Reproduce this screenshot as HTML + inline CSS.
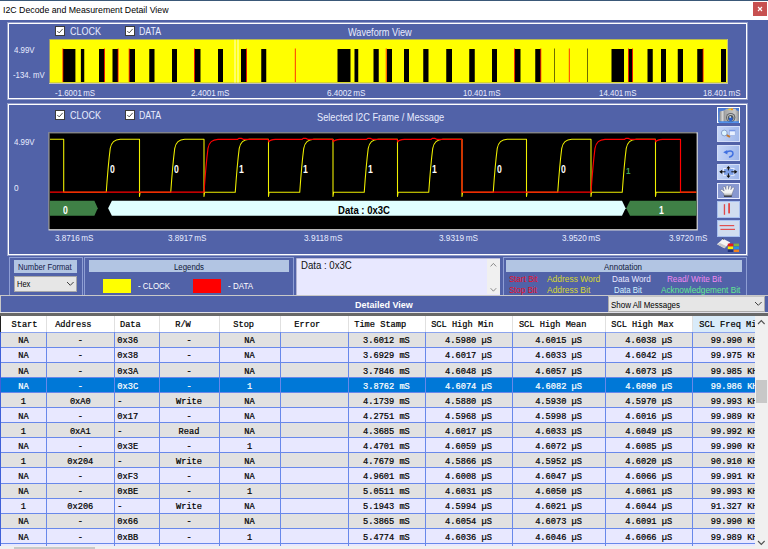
<!DOCTYPE html>
<html><head><meta charset="utf-8"><title>I2C Decode and Measurement Detail View</title>
<style>html,body{margin:0;padding:0}body{width:768px;height:549px;position:relative;overflow:hidden;background:#5162A8;font-family:"Liberation Sans",sans-serif}</style>
</head><body>
<div style="position:absolute;left:0;top:0;width:768px;height:20px;background:#fff"></div>
<div style="position:absolute;left:0;top:0;width:768px;height:1px;background:#3A5878"></div>
<span id="t0" style='position:absolute;white-space:pre;font:9.3px/1 "Liberation Sans",sans-serif;color:#000;transform-origin:0 50%;left:2.50px;top:6.16px;transform:scaleX(0.9429);'>I2C Decode and Measurement Detail View</span>
<div style="position:absolute;left:753px;top:2px;width:14px;height:14px;background:#C75050"></div>
<svg style="position:absolute;left:753px;top:2px" width="14" height="14"><path d="M5,5 L9,9 M9,5 L5,9" stroke="#fff" stroke-width="1.1" fill="none"/></svg>
<div style="position:absolute;left:8px;top:23px;width:737px;height:74px;border:1px solid #fff;box-shadow:0 0 0 1px rgba(255,255,255,.38)"></div>
<svg style="position:absolute;left:55px;top:26.3px" width="10" height="10" viewBox="0 0 10 10"><rect x="0.5" y="0.5" width="9" height="9" fill="#fff" stroke="#3c3c3c" stroke-width="1"/><path d="M2.3,5 L4.2,6.9 L7.7,2.9" stroke="#484848" stroke-width="0.95" fill="none"/></svg>
<svg style="position:absolute;left:124.5px;top:26.3px" width="10" height="10" viewBox="0 0 10 10"><rect x="0.5" y="0.5" width="9" height="9" fill="#fff" stroke="#3c3c3c" stroke-width="1"/><path d="M2.3,5 L4.2,6.9 L7.7,2.9" stroke="#484848" stroke-width="0.95" fill="none"/></svg>
<span id="t1" style='position:absolute;white-space:pre;font:10.2px/1 "Liberation Sans",sans-serif;color:#E8ECFF;transform-origin:0 50%;left:69.90px;top:26.52px;transform:scaleX(0.8830);'>CLOCK</span>
<span id="t2" style='position:absolute;white-space:pre;font:10.2px/1 "Liberation Sans",sans-serif;color:#E8ECFF;transform-origin:0 50%;left:139.00px;top:26.52px;transform:scaleX(0.8575);'>DATA</span>
<span id="t3" style='position:absolute;white-space:pre;font:10.2px/1 "Liberation Sans",sans-serif;color:#E8ECFF;transform-origin:0 50%;left:347.50px;top:28.02px;transform:scaleX(0.9009);'>Waveform View</span>
<span id="t4" style='position:absolute;white-space:pre;font:9.8px/1 "Liberation Sans",sans-serif;color:#E8ECFF;transform-origin:0 50%;left:14.00px;top:45.01px;transform:scaleX(0.8044);'>4.99V</span>
<span id="t5" style='position:absolute;white-space:pre;font:9.8px/1 "Liberation Sans",sans-serif;color:#E8ECFF;transform-origin:0 50%;left:13.40px;top:70.41px;transform:scaleX(0.7950);'>-134. mV</span>
<span id="t6" style='position:absolute;white-space:pre;font:9.8px/1 "Liberation Sans",sans-serif;color:#E8ECFF;transform-origin:0 50%;word-spacing:-1px;left:55.25px;top:87.51px;transform:scaleX(0.8055);'>-1.6001 mS</span>
<span id="t7" style='position:absolute;white-space:pre;font:9.8px/1 "Liberation Sans",sans-serif;color:#E8ECFF;transform-origin:0 50%;word-spacing:-1px;left:191.00px;top:87.51px;transform:scaleX(0.8299);'>2.4001 mS</span>
<span id="t8" style='position:absolute;white-space:pre;font:9.8px/1 "Liberation Sans",sans-serif;color:#E8ECFF;transform-origin:0 50%;word-spacing:-1px;left:326.50px;top:87.51px;transform:scaleX(0.8299);'>6.4002 mS</span>
<span id="t9" style='position:absolute;white-space:pre;font:9.8px/1 "Liberation Sans",sans-serif;color:#E8ECFF;transform-origin:0 50%;word-spacing:-1px;left:463.00px;top:87.51px;transform:scaleX(0.8084);'>10.401 mS</span>
<span id="t10" style='position:absolute;white-space:pre;font:9.8px/1 "Liberation Sans",sans-serif;color:#E8ECFF;transform-origin:0 50%;word-spacing:-1px;left:599.00px;top:87.51px;transform:scaleX(0.8084);'>14.401 mS</span>
<span id="t11" style='position:absolute;white-space:pre;font:9.8px/1 "Liberation Sans",sans-serif;color:#E8ECFF;transform-origin:0 50%;word-spacing:-1px;left:702.50px;top:87.51px;transform:scaleX(0.8084);'>18.401 mS</span>
<svg style="position:absolute;left:49px;top:39px" width="680" height="46" viewBox="49 39 680 46"><rect x="49" y="39" width="679" height="45" fill="#8a8a60"/><rect x="49" y="39" width="679" height="44.8" fill="#d0d0d0"/><rect x="49" y="39" width="678.5" height="44" fill="#9a9a70"/><rect x="50" y="39.7" width="677.3" height="42.9" fill="#FFFF00"/><rect x="63" y="49" width="12.40" height="33" fill="#000"/><rect x="62.5" y="48.5" width="0.8" height="33.5" fill="#f00"/><rect x="80.9" y="49" width="3.35" height="33" fill="#000"/><rect x="99" y="49" width="5.50" height="33" fill="#000"/><rect x="104.2" y="48.5" width="0.8" height="33.5" fill="#f00"/><rect x="112.5" y="49" width="5.50" height="33" fill="#000"/><rect x="117.7" y="48.5" width="0.8" height="33.5" fill="#f00"/><rect x="129.25" y="49" width="5.75" height="33" fill="#000"/><rect x="128.75" y="48.5" width="0.8" height="33.5" fill="#f00"/><rect x="149.25" y="49" width="5.25" height="33" fill="#000"/><rect x="172" y="49" width="5.00" height="33" fill="#000"/><rect x="194.5" y="49" width="6.00" height="33" fill="#000"/><rect x="194.0" y="48.5" width="0.8" height="33.5" fill="#f00"/><rect x="218" y="49" width="5.00" height="33" fill="#000"/><rect x="241" y="49" width="5.50" height="33" fill="#000"/><rect x="246.2" y="48.5" width="0.8" height="33.5" fill="#f00"/><rect x="261.25" y="49" width="5.00" height="33" fill="#000"/><rect x="337.5" y="49" width="13.00" height="33" fill="#000"/><rect x="354.5" y="49" width="3.75" height="33" fill="#000"/><rect x="373.5" y="49" width="5.25" height="33" fill="#000"/><rect x="387" y="49" width="5.00" height="33" fill="#000"/><rect x="385.8" y="48.5" width="0.8" height="33.5" fill="#f00"/><rect x="404" y="49" width="5.00" height="33" fill="#000"/><rect x="423.25" y="49" width="5.25" height="33" fill="#000"/><rect x="446.25" y="49" width="5.75" height="33" fill="#000"/><rect x="469.25" y="49" width="5.50" height="33" fill="#000"/><rect x="492" y="49" width="5.00" height="33" fill="#000"/><rect x="514.75" y="49" width="5.75" height="33" fill="#000"/><rect x="514.25" y="48.5" width="0.8" height="33.5" fill="#f00"/><rect x="535.25" y="49" width="5.50" height="33" fill="#000"/><rect x="540.45" y="48.5" width="0.8" height="33.5" fill="#f00"/><rect x="611.5" y="49" width="12.50" height="33" fill="#000"/><rect x="628.5" y="49" width="4.00" height="33" fill="#000"/><rect x="628.0" y="48.5" width="0.8" height="33.5" fill="#f00"/><rect x="632.2" y="48.5" width="0.8" height="33.5" fill="#f00"/><rect x="647.5" y="49" width="5.25" height="33" fill="#000"/><rect x="661" y="49" width="5.00" height="33" fill="#000"/><rect x="677.75" y="49" width="5.25" height="33" fill="#000"/><rect x="697.25" y="49" width="5.75" height="33" fill="#000"/><rect x="702.7" y="48.5" width="0.8" height="33.5" fill="#f00"/><rect x="721" y="49" width="5.00" height="33" fill="#000"/><rect x="234.5" y="39.7" width="1" height="42.9" fill="#FFFFD0"/><rect x="237.5" y="39.7" width="1" height="42.9" fill="#FFFFD0"/><rect x="294.85" y="48.5" width="0.8" height="33.5" fill="#f00"/><rect x="568.85" y="48.5" width="0.8" height="33.5" fill="#f00"/><rect x="554.1" y="48.5" width="0.8" height="33.5" fill="#4a4a00"/><rect x="587.0" y="48.5" width="0.8" height="33.5" fill="#4a4a00"/></svg>
<div style="position:absolute;left:8px;top:104px;width:737px;height:149px;border:1px solid #fff;box-shadow:0 0 0 1px rgba(255,255,255,.38)"></div>
<svg style="position:absolute;left:55px;top:110.3px" width="10" height="10" viewBox="0 0 10 10"><rect x="0.5" y="0.5" width="9" height="9" fill="#fff" stroke="#3c3c3c" stroke-width="1"/><path d="M2.3,5 L4.2,6.9 L7.7,2.9" stroke="#484848" stroke-width="0.95" fill="none"/></svg>
<svg style="position:absolute;left:124.5px;top:110.3px" width="10" height="10" viewBox="0 0 10 10"><rect x="0.5" y="0.5" width="9" height="9" fill="#fff" stroke="#3c3c3c" stroke-width="1"/><path d="M2.3,5 L4.2,6.9 L7.7,2.9" stroke="#484848" stroke-width="0.95" fill="none"/></svg>
<span id="t12" style='position:absolute;white-space:pre;font:10.2px/1 "Liberation Sans",sans-serif;color:#E8ECFF;transform-origin:0 50%;left:69.90px;top:111.22px;transform:scaleX(0.8830);'>CLOCK</span>
<span id="t13" style='position:absolute;white-space:pre;font:10.2px/1 "Liberation Sans",sans-serif;color:#E8ECFF;transform-origin:0 50%;left:139.00px;top:111.22px;transform:scaleX(0.8575);'>DATA</span>
<span id="t14" style='position:absolute;white-space:pre;font:10.2px/1 "Liberation Sans",sans-serif;color:#E8ECFF;transform-origin:0 50%;left:317.00px;top:112.92px;transform:scaleX(0.9062);'>Selected I2C Frame / Message</span>
<span id="t15" style='position:absolute;white-space:pre;font:9.8px/1 "Liberation Sans",sans-serif;color:#E8ECFF;transform-origin:0 50%;left:14.00px;top:137.01px;transform:scaleX(0.8044);'>4.99V</span>
<span id="t16" style='position:absolute;white-space:pre;font:9.8px/1 "Liberation Sans",sans-serif;color:#E8ECFF;transform-origin:0 50%;left:14.00px;top:183.21px;transform:scaleX(0.8436);'>0</span>
<span id="t17" style='position:absolute;white-space:pre;font:9.8px/1 "Liberation Sans",sans-serif;color:#E8ECFF;transform-origin:0 50%;word-spacing:-1px;left:55.00px;top:232.81px;transform:scaleX(0.8299);'>3.8716 mS</span>
<span id="t18" style='position:absolute;white-space:pre;font:9.8px/1 "Liberation Sans",sans-serif;color:#E8ECFF;transform-origin:0 50%;word-spacing:-1px;left:168.00px;top:232.81px;transform:scaleX(0.8299);'>3.8917 mS</span>
<span id="t19" style='position:absolute;white-space:pre;font:9.8px/1 "Liberation Sans",sans-serif;color:#E8ECFF;transform-origin:0 50%;word-spacing:-1px;left:304.00px;top:232.81px;transform:scaleX(0.8433);'>3.9118 mS</span>
<span id="t20" style='position:absolute;white-space:pre;font:9.8px/1 "Liberation Sans",sans-serif;color:#E8ECFF;transform-origin:0 50%;word-spacing:-1px;left:439.00px;top:232.81px;transform:scaleX(0.8407);'>3.9319 mS</span>
<span id="t21" style='position:absolute;white-space:pre;font:9.8px/1 "Liberation Sans",sans-serif;color:#E8ECFF;transform-origin:0 50%;word-spacing:-1px;left:562.00px;top:232.81px;transform:scaleX(0.8299);'>3.9520 mS</span>
<span id="t22" style='position:absolute;white-space:pre;font:9.8px/1 "Liberation Sans",sans-serif;color:#E8ECFF;transform-origin:0 50%;word-spacing:-1px;left:669.00px;top:232.81px;transform:scaleX(0.8299);'>3.9720 mS</span>
<svg style="position:absolute;left:48px;top:132px" width="651" height="100" viewBox="48 132 651 100"><rect x="48.5" y="132.3" width="649.3" height="98.2" fill="#d8d8d8"/><rect x="48.5" y="132.3" width="648" height="96.8" fill="#707070"/><rect x="49.75" y="133.5" width="646.75" height="95.6" fill="#000"/><path d="M50,139.3 L63.7,139.3 L63.7,192.2 L106.25,192.2 C107.65,172.2 108.85,159.3 110.25,148.3 C111.45,141.9 114.25,139.60000000000002 120.25,139.3 L139.50,139.3 L139.50,196.5 L140.10,192.2 L170.75,192.2 C172.15,172.2 173.35,159.3 174.75,148.3 C175.95,141.9 178.75,139.60000000000002 184.75,139.3 L204.00,139.3 L204.00,196.5 L204.60,192.2 L235.25,192.2 C236.65,172.2 237.85,159.3 239.25,148.3 C240.45,141.9 243.25,139.60000000000002 249.25,139.3 L268.50,139.3 L268.50,196.5 L269.10,192.2 L299.75,192.2 C301.15,172.2 302.35,159.3 303.75,148.3 C304.95,141.9 307.75,139.60000000000002 313.75,139.3 L333.00,139.3 L333.00,196.5 L333.60,192.2 L364.25,192.2 C365.65,172.2 366.85,159.3 368.25,148.3 C369.45,141.9 372.25,139.60000000000002 378.25,139.3 L397.50,139.3 L397.50,196.5 L398.10,192.2 L428.75,192.2 C430.15,172.2 431.35,159.3 432.75,148.3 C433.95,141.9 436.75,139.60000000000002 442.75,139.3 L462.00,139.3 L462.00,196.5 L462.60,192.2 L493.25,192.2 C494.65,172.2 495.85,159.3 497.25,148.3 C498.45,141.9 501.25,139.60000000000002 507.25,139.3 L526.50,139.3 L526.50,196.5 L527.10,192.2 L557.75,192.2 C559.15,172.2 560.35,159.3 561.75,148.3 C562.95,141.9 565.75,139.60000000000002 571.75,139.3 L591.00,139.3 L591.00,196.5 L591.60,192.2 L622.25,192.2 C623.65,172.2 624.85,159.3 626.25,148.3 C627.45,141.9 630.25,139.60000000000002 636.25,139.3 L655.50,139.3 L655.50,196.5 L656.10,192.2 L696.3,192.2" stroke="#F0F000" stroke-width="1.08" fill="none" stroke-linejoin="round"/><path d="M50,192.2 L204,192.2 C205.40,172.2 206.60,159.3 208.00,148.3 C209.20,141.9 212.00,139.60000000000002 218.00,139.3 L237.75,139.3 L238.75,138.4 L241.25,138.4 L243.25,139.3 L268.20,139.3 L268.90,141.8 C269.70,140.10000000000002 271.50,139.5 275.50,139.3 L302.25,139.3 L303.25,138.4 L305.75,138.4 L307.75,139.3 L332.70,139.3 L333.40,141.8 C334.20,140.10000000000002 336.00,139.5 340.00,139.3 L366.75,139.3 L367.75,138.4 L370.25,138.4 L372.25,139.3 L397.20,139.3 L397.90,141.8 C398.70,140.10000000000002 400.50,139.5 404.50,139.3 L431.25,139.3 L432.25,138.4 L434.75,138.4 L436.75,139.3 L462,139.3 L462,192.2 L591,192.2 C592.40,172.2 593.60,159.3 595.00,148.3 C596.20,141.9 599.00,139.60000000000002 605.00,139.3 L624.75,139.3 L625.75,138.4 L628.25,138.4 L630.25,139.3 L655.20,139.3 L655.90,141.8 C656.70,140.10000000000002 658.50,139.5 662.50,139.3 L680.5,139.3 L680.5,192.2 L696.3,192.2" stroke="#FF0000" stroke-width="1.18" fill="none" stroke-linejoin="round"/><polygon points="49.75,200.75 94.4,200.75 97.75,208.25 94.4,215.75 49.75,215.75" fill="#3F8046"/><polygon points="111.9,200.75 622,200.75 625.6,208.25 622,215.75 111.9,215.75 108.1,208.25" fill="#E0FFFF"/><polygon points="630,200.75 696.5,200.75 696.5,215.75 630,215.75 626.3,208.25" fill="#3F8046"/></svg>
<span id="t23" style='position:absolute;white-space:pre;font:bold 10px/1 "Liberation Sans",sans-serif;color:#fff;transform-origin:0 50%;left:109.85px;top:165.31px;transform:scaleX(0.8629);'>0</span>
<span id="t24" style='position:absolute;white-space:pre;font:bold 10px/1 "Liberation Sans",sans-serif;color:#fff;transform-origin:0 50%;left:174.35px;top:165.31px;transform:scaleX(0.8629);'>0</span>
<span id="t25" style='position:absolute;white-space:pre;font:bold 10px/1 "Liberation Sans",sans-serif;color:#fff;transform-origin:0 50%;left:238.85px;top:165.31px;transform:scaleX(0.8629);'>1</span>
<span id="t26" style='position:absolute;white-space:pre;font:bold 10px/1 "Liberation Sans",sans-serif;color:#fff;transform-origin:0 50%;left:303.35px;top:165.31px;transform:scaleX(0.8629);'>1</span>
<span id="t27" style='position:absolute;white-space:pre;font:bold 10px/1 "Liberation Sans",sans-serif;color:#fff;transform-origin:0 50%;left:367.85px;top:165.31px;transform:scaleX(0.8629);'>1</span>
<span id="t28" style='position:absolute;white-space:pre;font:bold 10px/1 "Liberation Sans",sans-serif;color:#fff;transform-origin:0 50%;left:432.35px;top:165.31px;transform:scaleX(0.8629);'>1</span>
<span id="t29" style='position:absolute;white-space:pre;font:bold 10px/1 "Liberation Sans",sans-serif;color:#fff;transform-origin:0 50%;left:496.85px;top:165.31px;transform:scaleX(0.8629);'>0</span>
<span id="t30" style='position:absolute;white-space:pre;font:bold 10px/1 "Liberation Sans",sans-serif;color:#fff;transform-origin:0 50%;left:561.35px;top:165.31px;transform:scaleX(0.8629);'>0</span>
<span id="t31" style='position:absolute;white-space:pre;font:bold 9.6px/1 "Liberation Sans",sans-serif;color:#3FA058;transform-origin:0 50%;left:626.40px;top:165.51px;transform:scaleX(0.8421);'>1</span>
<span id="t32" style='position:absolute;white-space:pre;font:bold 10px/1 "Liberation Sans",sans-serif;color:#fff;transform-origin:0 50%;left:62.85px;top:205.92px;transform:scaleX(0.8629);'>0</span>
<span id="t33" style='position:absolute;white-space:pre;font:bold 10px/1 "Liberation Sans",sans-serif;color:#fff;transform-origin:0 50%;left:659.10px;top:205.92px;transform:scaleX(0.8629);'>1</span>
<span id="t34" style='position:absolute;white-space:pre;font:bold 10.2px/1 "Liberation Sans",sans-serif;color:#000;transform-origin:0 50%;left:338.00px;top:206.32px;transform:scaleX(0.9369);'>Data : 0x3C</span>
<div style="position:absolute;left:717.4px;top:107.0px;width:22.8px;height:16.4px;box-sizing:border-box;background:linear-gradient(#4878D0,#6090E0);border:1px solid #fff"></div>
<div style="position:absolute;left:717.4px;top:126.0px;width:22.8px;height:16.4px;box-sizing:border-box;background:linear-gradient(100deg,#C6D6F8,#9EB6EA);border:1px solid #D4DEF8"></div>
<div style="position:absolute;left:717.4px;top:144.9px;width:22.8px;height:16.4px;box-sizing:border-box;background:linear-gradient(100deg,#C6D6F8,#9EB6EA);border:1px solid #D4DEF8"></div>
<div style="position:absolute;left:717.4px;top:163.7px;width:22.8px;height:16.4px;box-sizing:border-box;background:linear-gradient(100deg,#C6D6F8,#9EB6EA);border:1px solid #D4DEF8"></div>
<div style="position:absolute;left:717.4px;top:182.5px;width:22.8px;height:16.4px;box-sizing:border-box;background:#8898D0;border:1px solid #E8ECFF"></div>
<div style="position:absolute;left:717.4px;top:201.3px;width:22.8px;height:16.4px;box-sizing:border-box;background:#D0DDF0;border:1px solid #A8C0F0"></div>
<div style="position:absolute;left:717.4px;top:220.2px;width:22.8px;height:16.4px;box-sizing:border-box;background:#D0DDF0;border:1px solid #A8C0F0"></div>
<svg style="position:absolute;left:717px;top:106px" width="24" height="148" viewBox="717 106 24 148">
<defs>
<linearGradient id="cam" x1="0" y1="0" x2="1" y2="0"><stop offset="0" stop-color="#8c8c8c"/><stop offset=".18" stop-color="#e0e0e0"/><stop offset=".3" stop-color="#a8a8a8"/><stop offset=".8" stop-color="#c8c8c8"/><stop offset="1" stop-color="#909090"/></linearGradient>
<linearGradient id="hand" x1="0" y1="0" x2="0" y2="1"><stop offset="0" stop-color="#fff"/><stop offset=".7" stop-color="#f0f0f0"/><stop offset="1" stop-color="#a0a0a0"/></linearGradient>
</defs>
<!-- camera -->
<path d="M719.6,111.4 L724.4,110.4 L726.3,108.8 L735.6,108.8 L736.6,110.4 L738.8,111.2 L738.8,122 L719.6,122 Z" fill="url(#cam)"/>
<rect x="723.6" y="110.6" width="1" height="11.2" fill="#707070" fill-opacity=".7"/>
<rect x="728.4" y="108.5" width="4.6" height="1.6" fill="#F8D020"/><rect x="731" y="108.5" width="2" height="1.6" fill="#F09020"/>
<circle cx="730.7" cy="117.6" r="4.7" fill="#606468"/><circle cx="730.7" cy="117.6" r="3.6" fill="#c8c8c8"/><circle cx="730.7" cy="117.8" r="2.9" fill="#50585c"/>
<circle cx="730.7" cy="119" r="2" fill="#2860D0"/><circle cx="730.2" cy="117" r="0.9" fill="#d0d8e0"/>
<rect x="718.6" y="121.4" width="20.4" height="1.4" fill="#2878E8"/>
<!-- zoom -->
<rect x="729.4" y="130" width="5.8" height="5.6" fill="#E8F0FF" stroke="#90A8E0" stroke-width=".6"/><rect x="729.4" y="130" width="5.8" height="1.3" fill="#7898E8"/>
<path d="M725.8,134.6 L729.4,136.6" stroke="#C07830" stroke-width="1.8" stroke-linecap="round"/>
<circle cx="724.3" cy="133" r="2.9" fill="#DDF4FF" stroke="#8098C8" stroke-width=".9"/>
<!-- undo -->
<path d="M723.2,152.2 L727.4,150 L727.4,154.4 Z" fill="#4070E0"/>
<path d="M726.8,152.1 C730.5,150.2 733.2,151.2 733,153.6 C732.8,155.6 731,156.6 729.6,157" stroke="#4070E0" stroke-width="1.5" fill="none" stroke-linecap="round"/>
<!-- move -->
<rect x="723.6" y="168.5" width="10.4" height="6.8" fill="#5080E0" fill-opacity=".55" stroke="#F0F4FF" stroke-width=".9"/>
<path d="M719.2,171.8 L722.2,169.7 L722.2,173.9 Z M737.4,171.8 L734.4,169.7 L734.4,173.9 Z M728.4,166 L726.3,168.6 L730.5,168.6 Z M728.4,178 L726.3,175.4 L730.5,175.4 Z" fill="#101010"/>
<path d="M721,171.8 L725.5,171.8 M731.3,171.8 L736,171.8 M728.4,167.5 L728.4,170.4 M728.4,173.4 L728.4,176.5" stroke="#101010" stroke-width="1"/>
<!-- hand -->
<path d="M724.2,196 L723.6,193.4 L720.4,190.2 C720.6,189.2 721.8,189.2 722.6,189.8 L724.2,191 L723.2,187.2 C723.4,186.2 724.6,186.2 725,187.2 L726,189.6 L726.2,186 C726.6,185 727.8,185 728.2,186 L728.4,189.4 L729.4,186.2 C729.9,185.4 731,185.6 731.2,186.6 L730.8,189.8 L732.4,187.6 C733.2,187 734.2,187.4 734.2,188.4 L732.6,192.4 L731.6,196 Z" fill="url(#hand)" stroke="#404860" stroke-width=".35"/>
<path d="M724,196.2 L731.8,196.2" stroke="#202020" stroke-width="1"/>
<!-- v cursors -->
<rect x="723.8" y="204.2" width="1.3" height="10.6" fill="#E04848"/><rect x="728.2" y="203.2" width="1.8" height="10.2" fill="#E04848"/>
<!-- h cursors -->
<rect x="719.6" y="225" width="14.6" height="1.2" fill="#E05050"/><rect x="720.4" y="228.8" width="14.6" height="1.2" fill="#E05050"/>
<!-- bucket + palette -->
<path d="M717,244.3 L723.1,238.8 L730.3,242.4 L724.4,248.2 Z" fill="#f4f4f4"/><path d="M717,244.3 L724.4,248.2 L726.5,246.2 L720,243 Z" fill="#c8c8c8"/>
<path d="M722.4,238.4 L724,239.6" stroke="#303030" stroke-width=".8"/>
<rect x="727.8" y="243.6" width="5.4" height="2.9" fill="#E81818"/><rect x="733.8" y="243.6" width="5.2" height="2.7" fill="#80B040"/>
<rect x="727.8" y="246.5" width="5.4" height="2.9" fill="#F8F000"/><rect x="733.8" y="246.7" width="5.2" height="2.5" fill="#2090E8"/>
<rect x="727.8" y="249.4" width="5.4" height="2.6" fill="#203078"/><rect x="733.8" y="249.6" width="5.2" height="2.4" fill="#F08020"/>
</svg>

<div style="position:absolute;left:9px;top:257.3px;width:72px;height:37.69999999999999px;border:1px solid #8E9ED4;border-bottom:none"></div>
<div style="position:absolute;left:13.5px;top:260px;width:63.4px;height:12.5px;background:#B2C5E3"></div>
<span id="t35" style='position:absolute;white-space:pre;font:9.6px/1 "Liberation Sans",sans-serif;color:#14204a;transform-origin:0 50%;left:17.50px;top:262.01px;transform:scaleX(0.8002);'>Number Format</span>
<div style="position:absolute;left:13.5px;top:276px;width:63.2px;height:15.5px;box-sizing:border-box;background:#E6E6E6;border:1px solid #A8A8A8"></div>
<span id="t36" style='position:absolute;white-space:pre;font:9.3px/1 "Liberation Sans",sans-serif;color:#000;transform-origin:0 50%;left:16.90px;top:279.66px;transform:scaleX(0.8098);'>Hex</span>
<svg style="position:absolute;left:66px;top:281px" width="9" height="6"><path d="M1,1 L4.3,4.3 L7.6,1" stroke="#404040" stroke-width="1" fill="none"/></svg>
<div style="position:absolute;left:84.3px;top:257.3px;width:208.2px;height:37.69999999999999px;border:1px solid #8E9ED4;border-bottom:none"></div>
<div style="position:absolute;left:88.9px;top:260px;width:200px;height:12.2px;background:#B2C5E3"></div>
<span id="t37" style='position:absolute;white-space:pre;font:9.6px/1 "Liberation Sans",sans-serif;color:#10183a;transform-origin:0 50%;left:173.75px;top:261.91px;transform:scaleX(0.8149);'>Legends</span>
<div style="position:absolute;left:103.25px;top:279px;width:28px;height:13.75px;background:#FFFF00"></div>
<span id="t38" style='position:absolute;white-space:pre;font:9.8px/1 "Liberation Sans",sans-serif;color:#fff;transform-origin:0 50%;left:138.00px;top:280.91px;transform:scaleX(0.8050);'>- CLOCK</span>
<div style="position:absolute;left:193px;top:279px;width:28.25px;height:13.75px;background:#FF0000"></div>
<span id="t39" style='position:absolute;white-space:pre;font:9.8px/1 "Liberation Sans",sans-serif;color:#fff;transform-origin:0 50%;left:227.50px;top:280.91px;transform:scaleX(0.8151);'>- DATA</span>
<div style="position:absolute;left:296.25px;top:257.8px;width:204px;height:36.9px;background:#E8E8FF;box-shadow:inset 0.6px 0.6px 0 rgba(70,75,120,.55)"></div>
<div style="position:absolute;left:486.5px;top:258.5px;width:13.5px;height:35.5px;background:#F0F0F0"></div>
<svg style="position:absolute;left:490px;top:262px" width="8" height="6"><path d="M0.6,4.4 L3.4,1.4 L6.2,4.4" stroke="#808080" stroke-width="0.9" fill="none"/></svg>
<svg style="position:absolute;left:490px;top:286.5px" width="8" height="6"><path d="M0.6,1.2 L3.4,4.2 L6.2,1.2" stroke="#808080" stroke-width="0.9" fill="none"/></svg>
<span id="t40" style='position:absolute;white-space:pre;font:10px/1 "Liberation Sans",sans-serif;color:#101010;transform-origin:0 50%;left:301.25px;top:260.92px;transform:scaleX(0.9609);'>Data : 0x3C</span>
<div style="position:absolute;left:503.4px;top:257.3px;width:241.70000000000005px;height:37.69999999999999px;border:1px solid #8E9ED4;border-bottom:none"></div>
<div style="position:absolute;left:506.2px;top:260px;width:236px;height:12.2px;background:#B2C5E3"></div>
<span id="t41" style='position:absolute;white-space:pre;font:9.6px/1 "Liberation Sans",sans-serif;color:#10183a;transform-origin:0 50%;left:604.00px;top:261.71px;transform:scaleX(0.8283);'>Annotation</span>
<span id="t42" style='position:absolute;white-space:pre;font:9px/1 "Liberation Sans",sans-serif;color:#E8102A;transform-origin:0 50%;left:508.50px;top:274.60px;transform:scaleX(0.8902);'>Start Bit</span>
<span id="t43" style='position:absolute;white-space:pre;font:9px/1 "Liberation Sans",sans-serif;color:#E8102A;transform-origin:0 50%;left:508.50px;top:285.60px;transform:scaleX(0.8880);'>Stop Bit</span>
<span id="t44" style='position:absolute;white-space:pre;font:9px/1 "Liberation Sans",sans-serif;color:#D8D830;transform-origin:0 50%;left:546.50px;top:274.60px;transform:scaleX(0.9365);'>Address Word</span>
<span id="t45" style='position:absolute;white-space:pre;font:9px/1 "Liberation Sans",sans-serif;color:#D8D830;transform-origin:0 50%;left:546.50px;top:285.60px;transform:scaleX(0.9396);'>Address Bit</span>
<span id="t46" style='position:absolute;white-space:pre;font:9px/1 "Liberation Sans",sans-serif;color:#E8E8FF;transform-origin:0 50%;left:611.75px;top:274.60px;transform:scaleX(0.9041);'>Data Word</span>
<span id="t47" style='position:absolute;white-space:pre;font:9px/1 "Liberation Sans",sans-serif;color:#D0F0FF;transform-origin:0 50%;left:613.50px;top:285.60px;transform:scaleX(0.8746);'>Data Bit</span>
<span id="t48" style='position:absolute;white-space:pre;font:9px/1 "Liberation Sans",sans-serif;color:#F088F0;transform-origin:0 50%;left:666.50px;top:274.60px;transform:scaleX(0.9029);'>Read/ Write Bit</span>
<span id="t49" style='position:absolute;white-space:pre;font:9px/1 "Liberation Sans",sans-serif;color:#60E890;transform-origin:0 50%;left:661.00px;top:285.60px;transform:scaleX(0.9157);'>Acknowledgement Bit</span>
<div style="position:absolute;left:0;top:294.75px;width:768px;height:1.4px;background:#C8C8C8"></div>
<div style="position:absolute;left:0;top:294.75px;width:1.3px;height:18px;background:#C8C8C8"></div>
<div style="position:absolute;left:0;top:312.3px;width:768px;height:1px;background:#E0E0E8"></div>
<span id="t50" style='position:absolute;white-space:pre;font:bold 9.5px/1 "Liberation Sans",sans-serif;color:#fff;transform-origin:0 50%;left:355.00px;top:300.36px;transform:scaleX(0.9455);'>Detailed View</span>
<div style="position:absolute;left:608px;top:296.2px;width:156.8px;height:15.6px;box-sizing:border-box;background:#E6E6E6;border:1px solid #ACACAC;border-top-color:#C4C4C4"></div>
<span id="t51" style='position:absolute;white-space:pre;font:9.6px/1 "Liberation Sans",sans-serif;color:#000;transform-origin:0 50%;left:611.00px;top:299.61px;transform:scaleX(0.8295);'>Show All Messages</span>
<svg style="position:absolute;left:754px;top:301.2px" width="9" height="6"><path d="M1,1 L4.3,4.3 L7.6,1" stroke="#404040" stroke-width="1" fill="none"/></svg>
<div style="position:absolute;left:0;top:315.5px;width:755px;height:234px;background:#E8E8FF;overflow:hidden">
<div style="position:absolute;left:0;top:0;width:755px;height:16.5px;background:#fff"></div>
<div style="position:absolute;left:693.0px;top:0;width:62.5px;height:16.5px;background:#D9EBF9"></div>
<div style="position:absolute;left:0;top:16.60px;width:755px;height:15.59px;background:#E1E1E1"></div>
<div style="position:absolute;left:0;top:31.69px;width:755px;height:15.59px;background:#E8E8FF"></div>
<div style="position:absolute;left:0;top:46.78px;width:755px;height:15.59px;background:#E1E1E1"></div>
<div style="position:absolute;left:0;top:61.87px;width:755px;height:15.59px;background:#0078D7"></div>
<div style="position:absolute;left:0;top:76.96px;width:755px;height:15.59px;background:#E1E1E1"></div>
<div style="position:absolute;left:0;top:92.05px;width:755px;height:15.59px;background:#E8E8FF"></div>
<div style="position:absolute;left:0;top:107.14px;width:755px;height:15.59px;background:#E1E1E1"></div>
<div style="position:absolute;left:0;top:122.23px;width:755px;height:15.59px;background:#E8E8FF"></div>
<div style="position:absolute;left:0;top:137.32px;width:755px;height:15.59px;background:#E1E1E1"></div>
<div style="position:absolute;left:0;top:152.41px;width:755px;height:15.59px;background:#E8E8FF"></div>
<div style="position:absolute;left:0;top:167.50px;width:755px;height:15.59px;background:#E1E1E1"></div>
<div style="position:absolute;left:0;top:182.59px;width:755px;height:15.59px;background:#E8E8FF"></div>
<div style="position:absolute;left:0;top:197.68px;width:755px;height:15.59px;background:#E1E1E1"></div>
<div style="position:absolute;left:0;top:212.77px;width:755px;height:15.59px;background:#E8E8FF"></div>
<div style="position:absolute;left:0;top:16.10px;width:755px;height:1px;background:#8CA4EC"></div>
<div style="position:absolute;left:0;top:31.19px;width:755px;height:1px;background:#6888EA"></div>
<div style="position:absolute;left:0;top:46.28px;width:755px;height:1px;background:#6888EA"></div>
<div style="position:absolute;left:0;top:61.37px;width:755px;height:1px;background:#6888EA"></div>
<div style="position:absolute;left:0;top:76.46px;width:755px;height:1px;background:#6888EA"></div>
<div style="position:absolute;left:0;top:91.55px;width:755px;height:1px;background:#6888EA"></div>
<div style="position:absolute;left:0;top:106.64px;width:755px;height:1px;background:#6888EA"></div>
<div style="position:absolute;left:0;top:121.73px;width:755px;height:1px;background:#6888EA"></div>
<div style="position:absolute;left:0;top:136.82px;width:755px;height:1px;background:#6888EA"></div>
<div style="position:absolute;left:0;top:151.91px;width:755px;height:1px;background:#6888EA"></div>
<div style="position:absolute;left:0;top:167.00px;width:755px;height:1px;background:#6888EA"></div>
<div style="position:absolute;left:0;top:182.09px;width:755px;height:1px;background:#6888EA"></div>
<div style="position:absolute;left:0;top:197.18px;width:755px;height:1px;background:#6888EA"></div>
<div style="position:absolute;left:0;top:212.27px;width:755px;height:1px;background:#6888EA"></div>
<div style="position:absolute;left:0;top:227.36px;width:755px;height:1px;background:#6888EA"></div>
<div style="position:absolute;left:46.199999999999996px;top:0;width:1px;height:16.5px;background:#E0E0E0"></div>
<div style="position:absolute;left:46.199999999999996px;top:16.60px;width:1px;height:220px;background:#6888EA"></div>
<div style="position:absolute;left:114.2px;top:0;width:1px;height:16.5px;background:#E0E0E0"></div>
<div style="position:absolute;left:114.2px;top:16.60px;width:1px;height:220px;background:#6888EA"></div>
<div style="position:absolute;left:159.1px;top:0;width:1px;height:16.5px;background:#E0E0E0"></div>
<div style="position:absolute;left:159.1px;top:16.60px;width:1px;height:220px;background:#6888EA"></div>
<div style="position:absolute;left:218.70000000000002px;top:0;width:1px;height:16.5px;background:#E0E0E0"></div>
<div style="position:absolute;left:218.70000000000002px;top:16.60px;width:1px;height:220px;background:#6888EA"></div>
<div style="position:absolute;left:280.09999999999997px;top:0;width:1px;height:16.5px;background:#E0E0E0"></div>
<div style="position:absolute;left:280.09999999999997px;top:16.60px;width:1px;height:220px;background:#6888EA"></div>
<div style="position:absolute;left:347.9px;top:0;width:1px;height:16.5px;background:#E0E0E0"></div>
<div style="position:absolute;left:347.9px;top:16.60px;width:1px;height:220px;background:#6888EA"></div>
<div style="position:absolute;left:424.79999999999995px;top:0;width:1px;height:16.5px;background:#E0E0E0"></div>
<div style="position:absolute;left:424.79999999999995px;top:16.60px;width:1px;height:220px;background:#6888EA"></div>
<div style="position:absolute;left:512.0px;top:0;width:1px;height:16.5px;background:#E0E0E0"></div>
<div style="position:absolute;left:512.0px;top:16.60px;width:1px;height:220px;background:#6888EA"></div>
<div style="position:absolute;left:604.9px;top:0;width:1px;height:16.5px;background:#E0E0E0"></div>
<div style="position:absolute;left:604.9px;top:16.60px;width:1px;height:220px;background:#6888EA"></div>
<div style="position:absolute;left:692.4px;top:0;width:1px;height:16.5px;background:#E0E0E0"></div>
<div style="position:absolute;left:692.4px;top:16.60px;width:1px;height:220px;background:#6888EA"></div>
<div style="position:absolute;left:0;top:0;width:1.4px;height:16.5px;background:#202020"></div>
<div style="position:absolute;left:0;top:16.60px;width:1.4px;height:220px;background:#4060D8"></div>
</div>
<span id="t52" style='position:absolute;white-space:pre;font:8.67px/1 "Liberation Mono",monospace;color:#000;transform-origin:0 50%;-webkit-text-stroke:0.22px;left:11.51px;top:321.31px;transform:scale(1.0000,0.94);'>Start</span>
<span id="t53" style='position:absolute;white-space:pre;font:8.67px/1 "Liberation Mono",monospace;color:#000;transform-origin:0 50%;-webkit-text-stroke:0.22px;left:55.16px;top:321.31px;transform:scale(1.0000,0.94);'>Address</span>
<span id="t54" style='position:absolute;white-space:pre;font:8.67px/1 "Liberation Mono",monospace;color:#000;transform-origin:0 50%;-webkit-text-stroke:0.22px;left:119.96px;top:321.31px;transform:scale(1.0000,0.94);'>Data</span>
<span id="t55" style='position:absolute;white-space:pre;font:8.67px/1 "Liberation Mono",monospace;color:#000;transform-origin:0 50%;-webkit-text-stroke:0.22px;left:175.20px;top:321.31px;transform:scale(1.0000,0.94);'>R/W</span>
<span id="t56" style='position:absolute;white-space:pre;font:8.67px/1 "Liberation Mono",monospace;color:#000;transform-origin:0 50%;-webkit-text-stroke:0.22px;left:233.26px;top:321.31px;transform:scale(1.0000,0.94);'>Stop</span>
<span id="t57" style='position:absolute;white-space:pre;font:8.67px/1 "Liberation Mono",monospace;color:#000;transform-origin:0 50%;-webkit-text-stroke:0.22px;left:294.31px;top:321.31px;transform:scale(1.0000,0.94);'>Error</span>
<span id="t58" style='position:absolute;white-space:pre;font:8.67px/1 "Liberation Mono",monospace;color:#000;transform-origin:0 50%;-webkit-text-stroke:0.22px;left:354.22px;top:321.31px;transform:scale(1.0000,0.94);'>Time Stamp</span>
<span id="t59" style='position:absolute;white-space:pre;font:8.67px/1 "Liberation Mono",monospace;color:#000;transform-origin:0 50%;-webkit-text-stroke:0.22px;left:431.13px;top:321.31px;transform:scale(1.0000,0.94);'>SCL High Min</span>
<span id="t60" style='position:absolute;white-space:pre;font:8.67px/1 "Liberation Mono",monospace;color:#000;transform-origin:0 50%;-webkit-text-stroke:0.22px;left:518.93px;top:321.31px;transform:scale(1.0000,0.94);'>SCL High Mean</span>
<span id="t61" style='position:absolute;white-space:pre;font:8.67px/1 "Liberation Mono",monospace;color:#000;transform-origin:0 50%;-webkit-text-stroke:0.22px;left:611.33px;top:321.31px;transform:scale(1.0000,0.94);'>SCL High Max</span>
<div style="position:absolute;left:693.5px;top:316px;width:61.5px;height:15px;overflow:hidden"><span id="t62" style='position:absolute;white-space:pre;font:8.67px/1 "Liberation Mono",monospace;color:#000;transform-origin:0 50%;-webkit-text-stroke:0.22px;left:5.80px;top:5.31px;transform:scale(1.0000,0.94);'>SCL Freq Min</span></div>
<span id="t63" style='position:absolute;white-space:pre;font:8.67px/1 "Liberation Mono",monospace;color:#000;transform-origin:0 50%;-webkit-text-stroke:0.22px;left:18.20px;top:337.36px;transform:scale(1.0000,0.94);'>NA</span>
<span id="t64" style='position:absolute;white-space:pre;font:8.67px/1 "Liberation Mono",monospace;color:#000;transform-origin:0 50%;-webkit-text-stroke:0.22px;left:77.70px;top:337.36px;transform:scale(1.0000,0.94);'>-</span>
<span id="t65" style='position:absolute;white-space:pre;font:8.67px/1 "Liberation Mono",monospace;color:#000;transform-origin:0 50%;-webkit-text-stroke:0.22px;left:117.30px;top:337.36px;transform:scale(1.0000,0.94);'>0x36</span>
<span id="t66" style='position:absolute;white-space:pre;font:8.67px/1 "Liberation Mono",monospace;color:#000;transform-origin:0 50%;-webkit-text-stroke:0.22px;left:186.40px;top:337.36px;transform:scale(1.0000,0.94);'>-</span>
<span id="t67" style='position:absolute;white-space:pre;font:8.67px/1 "Liberation Mono",monospace;color:#000;transform-origin:0 50%;-webkit-text-stroke:0.22px;left:244.30px;top:337.36px;transform:scale(1.0000,0.94);'>NA</span>
<span id="t68" style='position:absolute;white-space:pre;font:8.67px/1 "Liberation Mono",monospace;color:#000;transform-origin:0 50%;-webkit-text-stroke:0.22px;left:363.07px;top:337.36px;transform:scale(1.0000,0.94);'>3.6012 mS</span>
<span id="t69" style='position:absolute;white-space:pre;font:8.67px/1 "Liberation Mono",monospace;color:#000;transform-origin:0 50%;-webkit-text-stroke:0.22px;left:445.12px;top:337.36px;transform:scale(1.0000,0.94);'>4.5980 µS</span>
<span id="t70" style='position:absolute;white-space:pre;font:8.67px/1 "Liberation Mono",monospace;color:#000;transform-origin:0 50%;-webkit-text-stroke:0.22px;left:535.17px;top:337.36px;transform:scale(1.0000,0.94);'>4.6015 µS</span>
<span id="t71" style='position:absolute;white-space:pre;font:8.67px/1 "Liberation Mono",monospace;color:#000;transform-origin:0 50%;-webkit-text-stroke:0.22px;left:625.37px;top:337.36px;transform:scale(1.0000,0.94);'>4.6038 µS</span>
<div style="position:absolute;left:693.5px;top:334.15px;width:61.5px;height:14px;overflow:hidden"><span id="t72" style='position:absolute;white-space:pre;font:8.67px/1 "Liberation Mono",monospace;color:#000;transform-origin:0 50%;-webkit-text-stroke:0.22px;left:17.30px;top:3.21px;transform:scale(1.0000,0.94);'>99.990 KHz</span></div>
<span id="t73" style='position:absolute;white-space:pre;font:8.67px/1 "Liberation Mono",monospace;color:#000;transform-origin:0 50%;-webkit-text-stroke:0.22px;left:18.20px;top:352.45px;transform:scale(1.0000,0.94);'>NA</span>
<span id="t74" style='position:absolute;white-space:pre;font:8.67px/1 "Liberation Mono",monospace;color:#000;transform-origin:0 50%;-webkit-text-stroke:0.22px;left:77.70px;top:352.45px;transform:scale(1.0000,0.94);'>-</span>
<span id="t75" style='position:absolute;white-space:pre;font:8.67px/1 "Liberation Mono",monospace;color:#000;transform-origin:0 50%;-webkit-text-stroke:0.22px;left:117.30px;top:352.45px;transform:scale(1.0000,0.94);'>0x38</span>
<span id="t76" style='position:absolute;white-space:pre;font:8.67px/1 "Liberation Mono",monospace;color:#000;transform-origin:0 50%;-webkit-text-stroke:0.22px;left:186.40px;top:352.45px;transform:scale(1.0000,0.94);'>-</span>
<span id="t77" style='position:absolute;white-space:pre;font:8.67px/1 "Liberation Mono",monospace;color:#000;transform-origin:0 50%;-webkit-text-stroke:0.22px;left:244.30px;top:352.45px;transform:scale(1.0000,0.94);'>NA</span>
<span id="t78" style='position:absolute;white-space:pre;font:8.67px/1 "Liberation Mono",monospace;color:#000;transform-origin:0 50%;-webkit-text-stroke:0.22px;left:363.07px;top:352.45px;transform:scale(1.0000,0.94);'>3.6929 mS</span>
<span id="t79" style='position:absolute;white-space:pre;font:8.67px/1 "Liberation Mono",monospace;color:#000;transform-origin:0 50%;-webkit-text-stroke:0.22px;left:445.12px;top:352.45px;transform:scale(1.0000,0.94);'>4.6017 µS</span>
<span id="t80" style='position:absolute;white-space:pre;font:8.67px/1 "Liberation Mono",monospace;color:#000;transform-origin:0 50%;-webkit-text-stroke:0.22px;left:535.17px;top:352.45px;transform:scale(1.0000,0.94);'>4.6033 µS</span>
<span id="t81" style='position:absolute;white-space:pre;font:8.67px/1 "Liberation Mono",monospace;color:#000;transform-origin:0 50%;-webkit-text-stroke:0.22px;left:625.37px;top:352.45px;transform:scale(1.0000,0.94);'>4.6042 µS</span>
<div style="position:absolute;left:693.5px;top:349.24px;width:61.5px;height:14px;overflow:hidden"><span id="t82" style='position:absolute;white-space:pre;font:8.67px/1 "Liberation Mono",monospace;color:#000;transform-origin:0 50%;-webkit-text-stroke:0.22px;left:17.30px;top:3.21px;transform:scale(1.0000,0.94);'>99.975 KHz</span></div>
<span id="t83" style='position:absolute;white-space:pre;font:8.67px/1 "Liberation Mono",monospace;color:#000;transform-origin:0 50%;-webkit-text-stroke:0.22px;left:18.20px;top:367.54px;transform:scale(1.0000,0.94);'>NA</span>
<span id="t84" style='position:absolute;white-space:pre;font:8.67px/1 "Liberation Mono",monospace;color:#000;transform-origin:0 50%;-webkit-text-stroke:0.22px;left:77.70px;top:367.54px;transform:scale(1.0000,0.94);'>-</span>
<span id="t85" style='position:absolute;white-space:pre;font:8.67px/1 "Liberation Mono",monospace;color:#000;transform-origin:0 50%;-webkit-text-stroke:0.22px;left:117.30px;top:367.54px;transform:scale(1.0000,0.94);'>0x3A</span>
<span id="t86" style='position:absolute;white-space:pre;font:8.67px/1 "Liberation Mono",monospace;color:#000;transform-origin:0 50%;-webkit-text-stroke:0.22px;left:186.40px;top:367.54px;transform:scale(1.0000,0.94);'>-</span>
<span id="t87" style='position:absolute;white-space:pre;font:8.67px/1 "Liberation Mono",monospace;color:#000;transform-origin:0 50%;-webkit-text-stroke:0.22px;left:244.30px;top:367.54px;transform:scale(1.0000,0.94);'>NA</span>
<span id="t88" style='position:absolute;white-space:pre;font:8.67px/1 "Liberation Mono",monospace;color:#000;transform-origin:0 50%;-webkit-text-stroke:0.22px;left:363.07px;top:367.54px;transform:scale(1.0000,0.94);'>3.7846 mS</span>
<span id="t89" style='position:absolute;white-space:pre;font:8.67px/1 "Liberation Mono",monospace;color:#000;transform-origin:0 50%;-webkit-text-stroke:0.22px;left:445.12px;top:367.54px;transform:scale(1.0000,0.94);'>4.6048 µS</span>
<span id="t90" style='position:absolute;white-space:pre;font:8.67px/1 "Liberation Mono",monospace;color:#000;transform-origin:0 50%;-webkit-text-stroke:0.22px;left:535.17px;top:367.54px;transform:scale(1.0000,0.94);'>4.6057 µS</span>
<span id="t91" style='position:absolute;white-space:pre;font:8.67px/1 "Liberation Mono",monospace;color:#000;transform-origin:0 50%;-webkit-text-stroke:0.22px;left:625.37px;top:367.54px;transform:scale(1.0000,0.94);'>4.6073 µS</span>
<div style="position:absolute;left:693.5px;top:364.33px;width:61.5px;height:14px;overflow:hidden"><span id="t92" style='position:absolute;white-space:pre;font:8.67px/1 "Liberation Mono",monospace;color:#000;transform-origin:0 50%;-webkit-text-stroke:0.22px;left:17.30px;top:3.21px;transform:scale(1.0000,0.94);'>99.985 KHz</span></div>
<span id="t93" style='position:absolute;white-space:pre;font:8.67px/1 "Liberation Mono",monospace;color:#fff;transform-origin:0 50%;-webkit-text-stroke:0.22px;left:18.20px;top:382.63px;transform:scale(1.0000,0.94);'>NA</span>
<span id="t94" style='position:absolute;white-space:pre;font:8.67px/1 "Liberation Mono",monospace;color:#fff;transform-origin:0 50%;-webkit-text-stroke:0.22px;left:77.70px;top:382.63px;transform:scale(1.0000,0.94);'>-</span>
<span id="t95" style='position:absolute;white-space:pre;font:8.67px/1 "Liberation Mono",monospace;color:#fff;transform-origin:0 50%;-webkit-text-stroke:0.22px;left:117.30px;top:382.63px;transform:scale(1.0000,0.94);'>0x3C</span>
<span id="t96" style='position:absolute;white-space:pre;font:8.67px/1 "Liberation Mono",monospace;color:#fff;transform-origin:0 50%;-webkit-text-stroke:0.22px;left:186.40px;top:382.63px;transform:scale(1.0000,0.94);'>-</span>
<span id="t97" style='position:absolute;white-space:pre;font:8.67px/1 "Liberation Mono",monospace;color:#fff;transform-origin:0 50%;-webkit-text-stroke:0.22px;left:246.90px;top:382.63px;transform:scale(1.0000,0.94);'>1</span>
<span id="t98" style='position:absolute;white-space:pre;font:8.67px/1 "Liberation Mono",monospace;color:#fff;transform-origin:0 50%;-webkit-text-stroke:0.22px;left:363.07px;top:382.63px;transform:scale(1.0000,0.94);'>3.8762 mS</span>
<span id="t99" style='position:absolute;white-space:pre;font:8.67px/1 "Liberation Mono",monospace;color:#fff;transform-origin:0 50%;-webkit-text-stroke:0.22px;left:445.12px;top:382.63px;transform:scale(1.0000,0.94);'>4.6074 µS</span>
<span id="t100" style='position:absolute;white-space:pre;font:8.67px/1 "Liberation Mono",monospace;color:#fff;transform-origin:0 50%;-webkit-text-stroke:0.22px;left:535.17px;top:382.63px;transform:scale(1.0000,0.94);'>4.6082 µS</span>
<span id="t101" style='position:absolute;white-space:pre;font:8.67px/1 "Liberation Mono",monospace;color:#fff;transform-origin:0 50%;-webkit-text-stroke:0.22px;left:625.37px;top:382.63px;transform:scale(1.0000,0.94);'>4.6090 µS</span>
<div style="position:absolute;left:693.5px;top:379.42px;width:61.5px;height:14px;overflow:hidden"><span id="t102" style='position:absolute;white-space:pre;font:8.67px/1 "Liberation Mono",monospace;color:#fff;transform-origin:0 50%;-webkit-text-stroke:0.22px;left:17.30px;top:3.21px;transform:scale(1.0000,0.94);'>99.986 KHz</span></div>
<span id="t103" style='position:absolute;white-space:pre;font:8.67px/1 "Liberation Mono",monospace;color:#000;transform-origin:0 50%;-webkit-text-stroke:0.22px;left:20.80px;top:397.72px;transform:scale(1.0000,0.94);'>1</span>
<span id="t104" style='position:absolute;white-space:pre;font:8.67px/1 "Liberation Mono",monospace;color:#000;transform-origin:0 50%;-webkit-text-stroke:0.22px;left:69.91px;top:397.72px;transform:scale(1.0000,0.94);'>0xA0</span>
<span id="t105" style='position:absolute;white-space:pre;font:8.67px/1 "Liberation Mono",monospace;color:#000;transform-origin:0 50%;-webkit-text-stroke:0.22px;left:117.30px;top:397.72px;transform:scale(1.0000,0.94);'>-</span>
<span id="t106" style='position:absolute;white-space:pre;font:8.67px/1 "Liberation Mono",monospace;color:#000;transform-origin:0 50%;-webkit-text-stroke:0.22px;left:176.01px;top:397.72px;transform:scale(1.0000,0.94);'>Write</span>
<span id="t107" style='position:absolute;white-space:pre;font:8.67px/1 "Liberation Mono",monospace;color:#000;transform-origin:0 50%;-webkit-text-stroke:0.22px;left:244.30px;top:397.72px;transform:scale(1.0000,0.94);'>NA</span>
<span id="t108" style='position:absolute;white-space:pre;font:8.67px/1 "Liberation Mono",monospace;color:#000;transform-origin:0 50%;-webkit-text-stroke:0.22px;left:363.07px;top:397.72px;transform:scale(1.0000,0.94);'>4.1739 mS</span>
<span id="t109" style='position:absolute;white-space:pre;font:8.67px/1 "Liberation Mono",monospace;color:#000;transform-origin:0 50%;-webkit-text-stroke:0.22px;left:445.12px;top:397.72px;transform:scale(1.0000,0.94);'>4.5880 µS</span>
<span id="t110" style='position:absolute;white-space:pre;font:8.67px/1 "Liberation Mono",monospace;color:#000;transform-origin:0 50%;-webkit-text-stroke:0.22px;left:535.17px;top:397.72px;transform:scale(1.0000,0.94);'>4.5930 µS</span>
<span id="t111" style='position:absolute;white-space:pre;font:8.67px/1 "Liberation Mono",monospace;color:#000;transform-origin:0 50%;-webkit-text-stroke:0.22px;left:625.37px;top:397.72px;transform:scale(1.0000,0.94);'>4.5970 µS</span>
<div style="position:absolute;left:693.5px;top:394.51px;width:61.5px;height:14px;overflow:hidden"><span id="t112" style='position:absolute;white-space:pre;font:8.67px/1 "Liberation Mono",monospace;color:#000;transform-origin:0 50%;-webkit-text-stroke:0.22px;left:17.30px;top:3.21px;transform:scale(1.0000,0.94);'>99.993 KHz</span></div>
<span id="t113" style='position:absolute;white-space:pre;font:8.67px/1 "Liberation Mono",monospace;color:#000;transform-origin:0 50%;-webkit-text-stroke:0.22px;left:18.20px;top:412.81px;transform:scale(1.0000,0.94);'>NA</span>
<span id="t114" style='position:absolute;white-space:pre;font:8.67px/1 "Liberation Mono",monospace;color:#000;transform-origin:0 50%;-webkit-text-stroke:0.22px;left:77.70px;top:412.81px;transform:scale(1.0000,0.94);'>-</span>
<span id="t115" style='position:absolute;white-space:pre;font:8.67px/1 "Liberation Mono",monospace;color:#000;transform-origin:0 50%;-webkit-text-stroke:0.22px;left:117.30px;top:412.81px;transform:scale(1.0000,0.94);'>0x17</span>
<span id="t116" style='position:absolute;white-space:pre;font:8.67px/1 "Liberation Mono",monospace;color:#000;transform-origin:0 50%;-webkit-text-stroke:0.22px;left:186.40px;top:412.81px;transform:scale(1.0000,0.94);'>-</span>
<span id="t117" style='position:absolute;white-space:pre;font:8.67px/1 "Liberation Mono",monospace;color:#000;transform-origin:0 50%;-webkit-text-stroke:0.22px;left:244.30px;top:412.81px;transform:scale(1.0000,0.94);'>NA</span>
<span id="t118" style='position:absolute;white-space:pre;font:8.67px/1 "Liberation Mono",monospace;color:#000;transform-origin:0 50%;-webkit-text-stroke:0.22px;left:363.07px;top:412.81px;transform:scale(1.0000,0.94);'>4.2751 mS</span>
<span id="t119" style='position:absolute;white-space:pre;font:8.67px/1 "Liberation Mono",monospace;color:#000;transform-origin:0 50%;-webkit-text-stroke:0.22px;left:445.12px;top:412.81px;transform:scale(1.0000,0.94);'>4.5968 µS</span>
<span id="t120" style='position:absolute;white-space:pre;font:8.67px/1 "Liberation Mono",monospace;color:#000;transform-origin:0 50%;-webkit-text-stroke:0.22px;left:535.17px;top:412.81px;transform:scale(1.0000,0.94);'>4.5998 µS</span>
<span id="t121" style='position:absolute;white-space:pre;font:8.67px/1 "Liberation Mono",monospace;color:#000;transform-origin:0 50%;-webkit-text-stroke:0.22px;left:625.37px;top:412.81px;transform:scale(1.0000,0.94);'>4.6016 µS</span>
<div style="position:absolute;left:693.5px;top:409.60px;width:61.5px;height:14px;overflow:hidden"><span id="t122" style='position:absolute;white-space:pre;font:8.67px/1 "Liberation Mono",monospace;color:#000;transform-origin:0 50%;-webkit-text-stroke:0.22px;left:17.30px;top:3.21px;transform:scale(1.0000,0.94);'>99.989 KHz</span></div>
<span id="t123" style='position:absolute;white-space:pre;font:8.67px/1 "Liberation Mono",monospace;color:#000;transform-origin:0 50%;-webkit-text-stroke:0.22px;left:20.80px;top:427.90px;transform:scale(1.0000,0.94);'>1</span>
<span id="t124" style='position:absolute;white-space:pre;font:8.67px/1 "Liberation Mono",monospace;color:#000;transform-origin:0 50%;-webkit-text-stroke:0.22px;left:69.91px;top:427.90px;transform:scale(1.0000,0.94);'>0xA1</span>
<span id="t125" style='position:absolute;white-space:pre;font:8.67px/1 "Liberation Mono",monospace;color:#000;transform-origin:0 50%;-webkit-text-stroke:0.22px;left:117.30px;top:427.90px;transform:scale(1.0000,0.94);'>-</span>
<span id="t126" style='position:absolute;white-space:pre;font:8.67px/1 "Liberation Mono",monospace;color:#000;transform-origin:0 50%;-webkit-text-stroke:0.22px;left:178.61px;top:427.90px;transform:scale(1.0000,0.94);'>Read</span>
<span id="t127" style='position:absolute;white-space:pre;font:8.67px/1 "Liberation Mono",monospace;color:#000;transform-origin:0 50%;-webkit-text-stroke:0.22px;left:244.30px;top:427.90px;transform:scale(1.0000,0.94);'>NA</span>
<span id="t128" style='position:absolute;white-space:pre;font:8.67px/1 "Liberation Mono",monospace;color:#000;transform-origin:0 50%;-webkit-text-stroke:0.22px;left:363.07px;top:427.90px;transform:scale(1.0000,0.94);'>4.3685 mS</span>
<span id="t129" style='position:absolute;white-space:pre;font:8.67px/1 "Liberation Mono",monospace;color:#000;transform-origin:0 50%;-webkit-text-stroke:0.22px;left:445.12px;top:427.90px;transform:scale(1.0000,0.94);'>4.6017 µS</span>
<span id="t130" style='position:absolute;white-space:pre;font:8.67px/1 "Liberation Mono",monospace;color:#000;transform-origin:0 50%;-webkit-text-stroke:0.22px;left:535.17px;top:427.90px;transform:scale(1.0000,0.94);'>4.6033 µS</span>
<span id="t131" style='position:absolute;white-space:pre;font:8.67px/1 "Liberation Mono",monospace;color:#000;transform-origin:0 50%;-webkit-text-stroke:0.22px;left:625.37px;top:427.90px;transform:scale(1.0000,0.94);'>4.6049 µS</span>
<div style="position:absolute;left:693.5px;top:424.69px;width:61.5px;height:14px;overflow:hidden"><span id="t132" style='position:absolute;white-space:pre;font:8.67px/1 "Liberation Mono",monospace;color:#000;transform-origin:0 50%;-webkit-text-stroke:0.22px;left:17.30px;top:3.21px;transform:scale(1.0000,0.94);'>99.992 KHz</span></div>
<span id="t133" style='position:absolute;white-space:pre;font:8.67px/1 "Liberation Mono",monospace;color:#000;transform-origin:0 50%;-webkit-text-stroke:0.22px;left:18.20px;top:442.99px;transform:scale(1.0000,0.94);'>NA</span>
<span id="t134" style='position:absolute;white-space:pre;font:8.67px/1 "Liberation Mono",monospace;color:#000;transform-origin:0 50%;-webkit-text-stroke:0.22px;left:77.70px;top:442.99px;transform:scale(1.0000,0.94);'>-</span>
<span id="t135" style='position:absolute;white-space:pre;font:8.67px/1 "Liberation Mono",monospace;color:#000;transform-origin:0 50%;-webkit-text-stroke:0.22px;left:117.30px;top:442.99px;transform:scale(1.0000,0.94);'>0x3E</span>
<span id="t136" style='position:absolute;white-space:pre;font:8.67px/1 "Liberation Mono",monospace;color:#000;transform-origin:0 50%;-webkit-text-stroke:0.22px;left:186.40px;top:442.99px;transform:scale(1.0000,0.94);'>-</span>
<span id="t137" style='position:absolute;white-space:pre;font:8.67px/1 "Liberation Mono",monospace;color:#000;transform-origin:0 50%;-webkit-text-stroke:0.22px;left:246.90px;top:442.99px;transform:scale(1.0000,0.94);'>1</span>
<span id="t138" style='position:absolute;white-space:pre;font:8.67px/1 "Liberation Mono",monospace;color:#000;transform-origin:0 50%;-webkit-text-stroke:0.22px;left:363.07px;top:442.99px;transform:scale(1.0000,0.94);'>4.4701 mS</span>
<span id="t139" style='position:absolute;white-space:pre;font:8.67px/1 "Liberation Mono",monospace;color:#000;transform-origin:0 50%;-webkit-text-stroke:0.22px;left:445.12px;top:442.99px;transform:scale(1.0000,0.94);'>4.6059 µS</span>
<span id="t140" style='position:absolute;white-space:pre;font:8.67px/1 "Liberation Mono",monospace;color:#000;transform-origin:0 50%;-webkit-text-stroke:0.22px;left:535.17px;top:442.99px;transform:scale(1.0000,0.94);'>4.6072 µS</span>
<span id="t141" style='position:absolute;white-space:pre;font:8.67px/1 "Liberation Mono",monospace;color:#000;transform-origin:0 50%;-webkit-text-stroke:0.22px;left:625.37px;top:442.99px;transform:scale(1.0000,0.94);'>4.6085 µS</span>
<div style="position:absolute;left:693.5px;top:439.78px;width:61.5px;height:14px;overflow:hidden"><span id="t142" style='position:absolute;white-space:pre;font:8.67px/1 "Liberation Mono",monospace;color:#000;transform-origin:0 50%;-webkit-text-stroke:0.22px;left:17.30px;top:3.21px;transform:scale(1.0000,0.94);'>99.990 KHz</span></div>
<span id="t143" style='position:absolute;white-space:pre;font:8.67px/1 "Liberation Mono",monospace;color:#000;transform-origin:0 50%;-webkit-text-stroke:0.22px;left:20.80px;top:458.08px;transform:scale(1.0000,0.94);'>1</span>
<span id="t144" style='position:absolute;white-space:pre;font:8.67px/1 "Liberation Mono",monospace;color:#000;transform-origin:0 50%;-webkit-text-stroke:0.22px;left:67.31px;top:458.08px;transform:scale(1.0000,0.94);'>0x204</span>
<span id="t145" style='position:absolute;white-space:pre;font:8.67px/1 "Liberation Mono",monospace;color:#000;transform-origin:0 50%;-webkit-text-stroke:0.22px;left:117.30px;top:458.08px;transform:scale(1.0000,0.94);'>-</span>
<span id="t146" style='position:absolute;white-space:pre;font:8.67px/1 "Liberation Mono",monospace;color:#000;transform-origin:0 50%;-webkit-text-stroke:0.22px;left:176.01px;top:458.08px;transform:scale(1.0000,0.94);'>Write</span>
<span id="t147" style='position:absolute;white-space:pre;font:8.67px/1 "Liberation Mono",monospace;color:#000;transform-origin:0 50%;-webkit-text-stroke:0.22px;left:244.30px;top:458.08px;transform:scale(1.0000,0.94);'>NA</span>
<span id="t148" style='position:absolute;white-space:pre;font:8.67px/1 "Liberation Mono",monospace;color:#000;transform-origin:0 50%;-webkit-text-stroke:0.22px;left:363.07px;top:458.08px;transform:scale(1.0000,0.94);'>4.7679 mS</span>
<span id="t149" style='position:absolute;white-space:pre;font:8.67px/1 "Liberation Mono",monospace;color:#000;transform-origin:0 50%;-webkit-text-stroke:0.22px;left:445.12px;top:458.08px;transform:scale(1.0000,0.94);'>4.5866 µS</span>
<span id="t150" style='position:absolute;white-space:pre;font:8.67px/1 "Liberation Mono",monospace;color:#000;transform-origin:0 50%;-webkit-text-stroke:0.22px;left:535.17px;top:458.08px;transform:scale(1.0000,0.94);'>4.5952 µS</span>
<span id="t151" style='position:absolute;white-space:pre;font:8.67px/1 "Liberation Mono",monospace;color:#000;transform-origin:0 50%;-webkit-text-stroke:0.22px;left:625.37px;top:458.08px;transform:scale(1.0000,0.94);'>4.6020 µS</span>
<div style="position:absolute;left:693.5px;top:454.87px;width:61.5px;height:14px;overflow:hidden"><span id="t152" style='position:absolute;white-space:pre;font:8.67px/1 "Liberation Mono",monospace;color:#000;transform-origin:0 50%;-webkit-text-stroke:0.22px;left:17.30px;top:3.21px;transform:scale(1.0000,0.94);'>90.910 KHz</span></div>
<span id="t153" style='position:absolute;white-space:pre;font:8.67px/1 "Liberation Mono",monospace;color:#000;transform-origin:0 50%;-webkit-text-stroke:0.22px;left:18.20px;top:473.17px;transform:scale(1.0000,0.94);'>NA</span>
<span id="t154" style='position:absolute;white-space:pre;font:8.67px/1 "Liberation Mono",monospace;color:#000;transform-origin:0 50%;-webkit-text-stroke:0.22px;left:77.70px;top:473.17px;transform:scale(1.0000,0.94);'>-</span>
<span id="t155" style='position:absolute;white-space:pre;font:8.67px/1 "Liberation Mono",monospace;color:#000;transform-origin:0 50%;-webkit-text-stroke:0.22px;left:117.30px;top:473.17px;transform:scale(1.0000,0.94);'>0xF3</span>
<span id="t156" style='position:absolute;white-space:pre;font:8.67px/1 "Liberation Mono",monospace;color:#000;transform-origin:0 50%;-webkit-text-stroke:0.22px;left:186.40px;top:473.17px;transform:scale(1.0000,0.94);'>-</span>
<span id="t157" style='position:absolute;white-space:pre;font:8.67px/1 "Liberation Mono",monospace;color:#000;transform-origin:0 50%;-webkit-text-stroke:0.22px;left:244.30px;top:473.17px;transform:scale(1.0000,0.94);'>NA</span>
<span id="t158" style='position:absolute;white-space:pre;font:8.67px/1 "Liberation Mono",monospace;color:#000;transform-origin:0 50%;-webkit-text-stroke:0.22px;left:363.07px;top:473.17px;transform:scale(1.0000,0.94);'>4.9601 mS</span>
<span id="t159" style='position:absolute;white-space:pre;font:8.67px/1 "Liberation Mono",monospace;color:#000;transform-origin:0 50%;-webkit-text-stroke:0.22px;left:445.12px;top:473.17px;transform:scale(1.0000,0.94);'>4.6008 µS</span>
<span id="t160" style='position:absolute;white-space:pre;font:8.67px/1 "Liberation Mono",monospace;color:#000;transform-origin:0 50%;-webkit-text-stroke:0.22px;left:535.17px;top:473.17px;transform:scale(1.0000,0.94);'>4.6047 µS</span>
<span id="t161" style='position:absolute;white-space:pre;font:8.67px/1 "Liberation Mono",monospace;color:#000;transform-origin:0 50%;-webkit-text-stroke:0.22px;left:625.37px;top:473.17px;transform:scale(1.0000,0.94);'>4.6066 µS</span>
<div style="position:absolute;left:693.5px;top:469.96px;width:61.5px;height:14px;overflow:hidden"><span id="t162" style='position:absolute;white-space:pre;font:8.67px/1 "Liberation Mono",monospace;color:#000;transform-origin:0 50%;-webkit-text-stroke:0.22px;left:17.30px;top:3.21px;transform:scale(1.0000,0.94);'>99.991 KHz</span></div>
<span id="t163" style='position:absolute;white-space:pre;font:8.67px/1 "Liberation Mono",monospace;color:#000;transform-origin:0 50%;-webkit-text-stroke:0.22px;left:18.20px;top:488.26px;transform:scale(1.0000,0.94);'>NA</span>
<span id="t164" style='position:absolute;white-space:pre;font:8.67px/1 "Liberation Mono",monospace;color:#000;transform-origin:0 50%;-webkit-text-stroke:0.22px;left:77.70px;top:488.26px;transform:scale(1.0000,0.94);'>-</span>
<span id="t165" style='position:absolute;white-space:pre;font:8.67px/1 "Liberation Mono",monospace;color:#000;transform-origin:0 50%;-webkit-text-stroke:0.22px;left:117.30px;top:488.26px;transform:scale(1.0000,0.94);'>0xBE</span>
<span id="t166" style='position:absolute;white-space:pre;font:8.67px/1 "Liberation Mono",monospace;color:#000;transform-origin:0 50%;-webkit-text-stroke:0.22px;left:186.40px;top:488.26px;transform:scale(1.0000,0.94);'>-</span>
<span id="t167" style='position:absolute;white-space:pre;font:8.67px/1 "Liberation Mono",monospace;color:#000;transform-origin:0 50%;-webkit-text-stroke:0.22px;left:246.90px;top:488.26px;transform:scale(1.0000,0.94);'>1</span>
<span id="t168" style='position:absolute;white-space:pre;font:8.67px/1 "Liberation Mono",monospace;color:#000;transform-origin:0 50%;-webkit-text-stroke:0.22px;left:363.07px;top:488.26px;transform:scale(1.0000,0.94);'>5.0511 mS</span>
<span id="t169" style='position:absolute;white-space:pre;font:8.67px/1 "Liberation Mono",monospace;color:#000;transform-origin:0 50%;-webkit-text-stroke:0.22px;left:445.12px;top:488.26px;transform:scale(1.0000,0.94);'>4.6031 µS</span>
<span id="t170" style='position:absolute;white-space:pre;font:8.67px/1 "Liberation Mono",monospace;color:#000;transform-origin:0 50%;-webkit-text-stroke:0.22px;left:535.17px;top:488.26px;transform:scale(1.0000,0.94);'>4.6050 µS</span>
<span id="t171" style='position:absolute;white-space:pre;font:8.67px/1 "Liberation Mono",monospace;color:#000;transform-origin:0 50%;-webkit-text-stroke:0.22px;left:625.37px;top:488.26px;transform:scale(1.0000,0.94);'>4.6061 µS</span>
<div style="position:absolute;left:693.5px;top:485.05px;width:61.5px;height:14px;overflow:hidden"><span id="t172" style='position:absolute;white-space:pre;font:8.67px/1 "Liberation Mono",monospace;color:#000;transform-origin:0 50%;-webkit-text-stroke:0.22px;left:17.30px;top:3.21px;transform:scale(1.0000,0.94);'>99.993 KHz</span></div>
<span id="t173" style='position:absolute;white-space:pre;font:8.67px/1 "Liberation Mono",monospace;color:#000;transform-origin:0 50%;-webkit-text-stroke:0.22px;left:20.80px;top:503.35px;transform:scale(1.0000,0.94);'>1</span>
<span id="t174" style='position:absolute;white-space:pre;font:8.67px/1 "Liberation Mono",monospace;color:#000;transform-origin:0 50%;-webkit-text-stroke:0.22px;left:67.31px;top:503.35px;transform:scale(1.0000,0.94);'>0x206</span>
<span id="t175" style='position:absolute;white-space:pre;font:8.67px/1 "Liberation Mono",monospace;color:#000;transform-origin:0 50%;-webkit-text-stroke:0.22px;left:117.30px;top:503.35px;transform:scale(1.0000,0.94);'>-</span>
<span id="t176" style='position:absolute;white-space:pre;font:8.67px/1 "Liberation Mono",monospace;color:#000;transform-origin:0 50%;-webkit-text-stroke:0.22px;left:176.01px;top:503.35px;transform:scale(1.0000,0.94);'>Write</span>
<span id="t177" style='position:absolute;white-space:pre;font:8.67px/1 "Liberation Mono",monospace;color:#000;transform-origin:0 50%;-webkit-text-stroke:0.22px;left:244.30px;top:503.35px;transform:scale(1.0000,0.94);'>NA</span>
<span id="t178" style='position:absolute;white-space:pre;font:8.67px/1 "Liberation Mono",monospace;color:#000;transform-origin:0 50%;-webkit-text-stroke:0.22px;left:363.07px;top:503.35px;transform:scale(1.0000,0.94);'>5.1943 mS</span>
<span id="t179" style='position:absolute;white-space:pre;font:8.67px/1 "Liberation Mono",monospace;color:#000;transform-origin:0 50%;-webkit-text-stroke:0.22px;left:445.12px;top:503.35px;transform:scale(1.0000,0.94);'>4.5994 µS</span>
<span id="t180" style='position:absolute;white-space:pre;font:8.67px/1 "Liberation Mono",monospace;color:#000;transform-origin:0 50%;-webkit-text-stroke:0.22px;left:535.17px;top:503.35px;transform:scale(1.0000,0.94);'>4.6021 µS</span>
<span id="t181" style='position:absolute;white-space:pre;font:8.67px/1 "Liberation Mono",monospace;color:#000;transform-origin:0 50%;-webkit-text-stroke:0.22px;left:625.37px;top:503.35px;transform:scale(1.0000,0.94);'>4.6044 µS</span>
<div style="position:absolute;left:693.5px;top:500.14px;width:61.5px;height:14px;overflow:hidden"><span id="t182" style='position:absolute;white-space:pre;font:8.67px/1 "Liberation Mono",monospace;color:#000;transform-origin:0 50%;-webkit-text-stroke:0.22px;left:17.30px;top:3.21px;transform:scale(1.0000,0.94);'>91.327 KHz</span></div>
<span id="t183" style='position:absolute;white-space:pre;font:8.67px/1 "Liberation Mono",monospace;color:#000;transform-origin:0 50%;-webkit-text-stroke:0.22px;left:18.20px;top:518.44px;transform:scale(1.0000,0.94);'>NA</span>
<span id="t184" style='position:absolute;white-space:pre;font:8.67px/1 "Liberation Mono",monospace;color:#000;transform-origin:0 50%;-webkit-text-stroke:0.22px;left:77.70px;top:518.44px;transform:scale(1.0000,0.94);'>-</span>
<span id="t185" style='position:absolute;white-space:pre;font:8.67px/1 "Liberation Mono",monospace;color:#000;transform-origin:0 50%;-webkit-text-stroke:0.22px;left:117.30px;top:518.44px;transform:scale(1.0000,0.94);'>0x66</span>
<span id="t186" style='position:absolute;white-space:pre;font:8.67px/1 "Liberation Mono",monospace;color:#000;transform-origin:0 50%;-webkit-text-stroke:0.22px;left:186.40px;top:518.44px;transform:scale(1.0000,0.94);'>-</span>
<span id="t187" style='position:absolute;white-space:pre;font:8.67px/1 "Liberation Mono",monospace;color:#000;transform-origin:0 50%;-webkit-text-stroke:0.22px;left:244.30px;top:518.44px;transform:scale(1.0000,0.94);'>NA</span>
<span id="t188" style='position:absolute;white-space:pre;font:8.67px/1 "Liberation Mono",monospace;color:#000;transform-origin:0 50%;-webkit-text-stroke:0.22px;left:363.07px;top:518.44px;transform:scale(1.0000,0.94);'>5.3865 mS</span>
<span id="t189" style='position:absolute;white-space:pre;font:8.67px/1 "Liberation Mono",monospace;color:#000;transform-origin:0 50%;-webkit-text-stroke:0.22px;left:445.12px;top:518.44px;transform:scale(1.0000,0.94);'>4.6054 µS</span>
<span id="t190" style='position:absolute;white-space:pre;font:8.67px/1 "Liberation Mono",monospace;color:#000;transform-origin:0 50%;-webkit-text-stroke:0.22px;left:535.17px;top:518.44px;transform:scale(1.0000,0.94);'>4.6073 µS</span>
<span id="t191" style='position:absolute;white-space:pre;font:8.67px/1 "Liberation Mono",monospace;color:#000;transform-origin:0 50%;-webkit-text-stroke:0.22px;left:625.37px;top:518.44px;transform:scale(1.0000,0.94);'>4.6091 µS</span>
<div style="position:absolute;left:693.5px;top:515.23px;width:61.5px;height:14px;overflow:hidden"><span id="t192" style='position:absolute;white-space:pre;font:8.67px/1 "Liberation Mono",monospace;color:#000;transform-origin:0 50%;-webkit-text-stroke:0.22px;left:17.30px;top:3.21px;transform:scale(1.0000,0.94);'>99.990 KHz</span></div>
<span id="t193" style='position:absolute;white-space:pre;font:8.67px/1 "Liberation Mono",monospace;color:#000;transform-origin:0 50%;-webkit-text-stroke:0.22px;left:18.20px;top:533.53px;transform:scale(1.0000,0.94);'>NA</span>
<span id="t194" style='position:absolute;white-space:pre;font:8.67px/1 "Liberation Mono",monospace;color:#000;transform-origin:0 50%;-webkit-text-stroke:0.22px;left:77.70px;top:533.53px;transform:scale(1.0000,0.94);'>-</span>
<span id="t195" style='position:absolute;white-space:pre;font:8.67px/1 "Liberation Mono",monospace;color:#000;transform-origin:0 50%;-webkit-text-stroke:0.22px;left:117.30px;top:533.53px;transform:scale(1.0000,0.94);'>0xBB</span>
<span id="t196" style='position:absolute;white-space:pre;font:8.67px/1 "Liberation Mono",monospace;color:#000;transform-origin:0 50%;-webkit-text-stroke:0.22px;left:186.40px;top:533.53px;transform:scale(1.0000,0.94);'>-</span>
<span id="t197" style='position:absolute;white-space:pre;font:8.67px/1 "Liberation Mono",monospace;color:#000;transform-origin:0 50%;-webkit-text-stroke:0.22px;left:246.90px;top:533.53px;transform:scale(1.0000,0.94);'>1</span>
<span id="t198" style='position:absolute;white-space:pre;font:8.67px/1 "Liberation Mono",monospace;color:#000;transform-origin:0 50%;-webkit-text-stroke:0.22px;left:363.07px;top:533.53px;transform:scale(1.0000,0.94);'>5.4774 mS</span>
<span id="t199" style='position:absolute;white-space:pre;font:8.67px/1 "Liberation Mono",monospace;color:#000;transform-origin:0 50%;-webkit-text-stroke:0.22px;left:445.12px;top:533.53px;transform:scale(1.0000,0.94);'>4.6036 µS</span>
<span id="t200" style='position:absolute;white-space:pre;font:8.67px/1 "Liberation Mono",monospace;color:#000;transform-origin:0 50%;-webkit-text-stroke:0.22px;left:535.17px;top:533.53px;transform:scale(1.0000,0.94);'>4.6046 µS</span>
<span id="t201" style='position:absolute;white-space:pre;font:8.67px/1 "Liberation Mono",monospace;color:#000;transform-origin:0 50%;-webkit-text-stroke:0.22px;left:625.37px;top:533.53px;transform:scale(1.0000,0.94);'>4.6066 µS</span>
<div style="position:absolute;left:693.5px;top:530.31px;width:61.5px;height:14px;overflow:hidden"><span id="t202" style='position:absolute;white-space:pre;font:8.67px/1 "Liberation Mono",monospace;color:#000;transform-origin:0 50%;-webkit-text-stroke:0.22px;left:17.30px;top:3.21px;transform:scale(1.0000,0.94);'>99.989 KHz</span></div>
<div style="position:absolute;left:0;top:313.3px;width:768px;height:2.3px;background:#686868"></div>
<div style="position:absolute;left:754.7px;top:315.5px;width:13.3px;height:233.5px;background:#F0F0F0"></div>
<div style="position:absolute;left:755.6px;top:380px;width:11.6px;height:22.5px;background:#C8C8C8"></div>
<svg style="position:absolute;left:757px;top:319px" width="9" height="6"><path d="M1,5 L4.3,1.5 L7.6,5" stroke="#505050" stroke-width="1.1" fill="none"/></svg>
<svg style="position:absolute;left:757px;top:540px" width="9" height="6"><path d="M1,1 L4.3,4.5 L7.6,1" stroke="#505050" stroke-width="1.1" fill="none"/></svg>
<div style="position:absolute;left:0;top:546px;width:755px;height:3px;background:#F0F0F0"></div>
<div style="position:absolute;left:13.75px;top:547px;width:81px;height:2px;background:#C8C8C8"></div>
</body></html>
